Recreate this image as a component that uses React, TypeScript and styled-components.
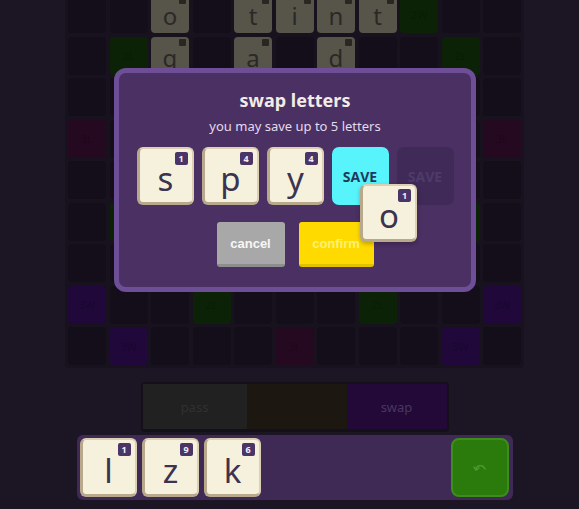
import React from 'react';
import styled, { createGlobalStyle } from 'styled-components';

type Cell = { kind?: 'tw' | 'dw' | 'tl' | 'dl'; label?: string; letter?: string };

const GlobalStyle = createGlobalStyle`
  html, body {
    margin: 0;
    padding: 0;
    background: #1c1624;
  }
  body {
    font-family: 'Noto Sans', 'Open Sans', sans-serif;
  }
`;

const cellColors = {
  tw: '#20083a',
  dw: '#0c2206',
  tl: '#250920',
  dl: '#0c2206',
};

const labelColors = {
  tw: '#1a0632',
  dw: '#0a1c05',
  tl: '#1f071b',
  dl: '#0a1c05',
};

// 9 visible rows of the 11-column board
const board: Cell[][] = Array.from({ length: 9 }, () =>
  Array.from({ length: 11 }, () => ({})),
);
const put = (r: number, c: number, cell: Cell) => {
  board[r][c] = cell;
};
put(0, 2, { letter: 'o' });
put(0, 4, { letter: 't' });
put(0, 5, { letter: 'i' });
put(0, 6, { letter: 'n' });
put(0, 7, { letter: 't' });
put(0, 8, { kind: 'dw', label: '2W' });
put(1, 1, { kind: 'dl', label: '2L' });
put(1, 2, { letter: 'g' });
put(1, 4, { letter: 'a' });
put(1, 6, { letter: 'd' });
put(1, 9, { kind: 'dl', label: '2L' });
put(3, 0, { kind: 'tl', label: '3L' });
put(3, 10, { kind: 'tl', label: '3L' });
put(5, 1, { kind: 'dl', label: '2L' });
put(5, 9, { kind: 'dl', label: '2L' });
put(7, 0, { kind: 'tw', label: '3W' });
put(7, 3, { kind: 'dl', label: '2L' });
put(7, 7, { kind: 'dl', label: '2L' });
put(7, 10, { kind: 'tw', label: '3W' });
put(8, 1, { kind: 'tw', label: '3W' });
put(8, 5, { kind: 'tl', label: '3L' });
put(8, 9, { kind: 'tw', label: '3W' });

const swapTiles = [
  { letter: 's', score: 1 },
  { letter: 'p', score: 4 },
  { letter: 'y', score: 4 },
];

const rackTiles = [
  { letter: 'l', score: 1 },
  { letter: 'z', score: 9 },
  { letter: 'k', score: 6 },
];

const Page = styled.div`
  position: relative;
  width: 579px;
  height: 509px;
  box-sizing: border-box;
  padding-left: 10px;
  overflow: hidden;
  display: flex;
  flex-direction: column;
  align-items: center;
`;

const Board = styled.div`
  margin-top: -8px;
  padding: 3px;
  background: #17121e;
  border-radius: 4px;
  display: grid;
  grid-template-columns: repeat(11, 38px);
  grid-auto-rows: 38px;
  gap: 3.5px;
`;

const Square = styled.div<{ $kind?: Cell['kind'] }>`
  border-radius: 4px;
  background: ${p => (p.$kind ? cellColors[p.$kind] : '#130e19')};
  color: ${p => (p.$kind ? labelColors[p.$kind] : 'transparent')};
  display: flex;
  align-items: center;
  justify-content: center;
  font-size: 11px;
`;

const BoardTile = styled.div`
  position: relative;
  border-radius: 4px;
  background: #57544a;
  color: #2b2925;
  display: flex;
  align-items: center;
  justify-content: center;
  font-size: 24px;
  line-height: 1;
  padding-top: 4px;
  box-sizing: border-box;
`;

const BoardBadge = styled.span`
  position: absolute;
  top: 2px;
  right: 3px;
  width: 7px;
  height: 7px;
  border-radius: 1px;
  background: #2a2723;
`;

const Modal = styled.div`
  position: absolute;
  left: 114px;
  top: 68px;
  width: 362px;
  height: 224px;
  box-sizing: border-box;
  border: 5px solid #6d4e97;
  border-radius: 12px;
  background: #4a3063;
  display: flex;
  flex-direction: column;
  align-items: center;
  padding-top: 15px;
`;

const Title = styled.div`
  font-size: 18px;
  line-height: 24px;
  font-weight: 700;
  color: #f3ece6;
`;

const Subtitle = styled.div`
  margin-top: 5px;
  font-size: 13px;
  line-height: 18px;
  color: #e4dbea;
`;

const TileRow = styled.div`
  margin-top: 12px;
  display: flex;
  gap: 8px;
`;

const Tile = styled.div<{ $h?: number }>`
  position: relative;
  width: 57px;
  height: ${p => p.$h ?? 58}px;
  box-sizing: border-box;
  border: 2px solid #ddd0b2;
  border-left: 3px solid #b8a98c;
  border-bottom: 3px solid #b8a98c;
  border-radius: 6px;
  background: #f6f1dc;
  color: #3b3350;
  display: flex;
  align-items: center;
  justify-content: center;
  font-size: 33px;
  line-height: 1;
  padding-top: 6px;
`;

const Score = styled.span`
  position: absolute;
  top: 3px;
  right: 4px;
  width: 13px;
  height: 13px;
  border-radius: 2px;
  background: #4a3566;
  color: #f4eefa;
  font-size: 9px;
  font-weight: 700;
  line-height: 13px;
  text-align: center;
`;

const SaveSlot = styled.div<{ $active?: boolean }>`
  width: 57px;
  height: 58px;
  border-radius: 7px;
  background: ${p => (p.$active ? '#57f4fb' : '#3f2a58')};
  color: ${p => (p.$active ? '#1f3a5c' : '#4f3b69')};
  font-family: 'Open Sans', sans-serif;
  font-weight: 700;
  font-size: 14px;
  display: flex;
  align-items: center;
  justify-content: center;
`;

const ButtonRow = styled.div`
  margin-top: 17px;
  display: flex;
  gap: 14px;
`;

const ActionButton = styled.div<{ $tone: 'grey' | 'yellow' }>`
  height: 45px;
  width: ${p => (p.$tone === 'grey' ? 68 : 75)}px;
  box-sizing: border-box;
  border-radius: 3px;
  border-bottom: 3px solid ${p => (p.$tone === 'grey' ? '#8e8e8e' : '#e3c000')};
  background: ${p => (p.$tone === 'grey' ? '#a8a8a8' : '#ffda00')};
  color: ${p => (p.$tone === 'grey' ? '#f7f7f7' : '#fff176')};
  font-family: 'Liberation Sans', Arial, sans-serif;
  font-weight: 700;
  font-size: 13px;
  display: flex;
  align-items: center;
  justify-content: center;
`;

const DraggedTile = styled(Tile)`
  position: absolute;
  left: 241px;
  top: 111px;
  box-shadow: 0 2px 4px rgba(0, 0, 0, 0.25);
`;

const TurnBar = styled.div`
  margin-top: 14px;
  width: 308px;
  height: 50px;
  box-sizing: border-box;
  padding: 2px 2px 3px;
  border-radius: 4px;
  background: #141019;
  display: grid;
  grid-template-columns: 104px 100px 1fr;
`;

const TurnButton = styled.div<{ $bg: string; $fg: string }>`
  background: ${p => p.$bg};
  color: ${p => p.$fg};
  font-size: 13px;
  display: flex;
  align-items: center;
  justify-content: center;
`;

const Rack = styled.div`
  margin-top: 3px;
  width: 436px;
  height: 65px;
  box-sizing: border-box;
  padding: 3px 4px 3px 3px;
  border-radius: 6px;
  background: #3e2a55;
  display: flex;
  gap: 5px;
`;

const UndoButton = styled.div`
  margin-left: auto;
  width: 58px;
  height: 59px;
  box-sizing: border-box;
  border: 2px solid #3c8d1c;
  border-radius: 8px;
  background: #2b7b0c;
  color: #4f9a35;
  display: flex;
  align-items: center;
  justify-content: center;
`;

function LetterTile({ letter, score, h }: { letter: string; score: number; h?: number }) {
  return (
    <Tile $h={h}>
      {letter}
      <Score>{score}</Score>
    </Tile>
  );
}

export default function App() {
  return (
    <>
      <GlobalStyle />
      <Page>
        <Board>
          {board.flatMap((row, r) =>
            row.map((cell, c) =>
              cell.letter ? (
                <BoardTile key={`${r}-${c}`}>
                  {cell.letter}
                  <BoardBadge />
                </BoardTile>
              ) : (
                <Square key={`${r}-${c}`} $kind={cell.kind}>
                  {cell.label}
                </Square>
              ),
            ),
          )}
        </Board>

        <TurnBar>
          <TurnButton $bg="#212121" $fg="#303030">pass</TurnButton>
          <TurnButton $bg="#1c1711" $fg="#1c1711">play</TurnButton>
          <TurnButton $bg="#220938" $fg="#4a3760">swap</TurnButton>
        </TurnBar>

        <Rack>
          {rackTiles.map(t => (
            <LetterTile key={t.letter} letter={t.letter} score={t.score} h={59} />
          ))}
          <UndoButton>
            <svg width="14" height="10" viewBox="0 0 14 10" fill="none">
              <path
                d="M3 6 C4 2, 10 1, 12 6"
                stroke="currentColor"
                strokeWidth="1.4"
                strokeLinecap="round"
              />
              <path d="M1 4 L3 7 L6 5" stroke="currentColor" strokeWidth="1.4" strokeLinecap="round" />
            </svg>
          </UndoButton>
        </Rack>

        <Modal>
          <Title>swap letters</Title>
          <Subtitle>you may save up to 5 letters</Subtitle>
          <TileRow>
            {swapTiles.map(t => (
              <LetterTile key={t.letter} letter={t.letter} score={t.score} />
            ))}
            <SaveSlot $active>SAVE</SaveSlot>
            <SaveSlot>SAVE</SaveSlot>
          </TileRow>
          <ButtonRow>
            <ActionButton $tone="grey">cancel</ActionButton>
            <ActionButton $tone="yellow">confirm</ActionButton>
          </ButtonRow>
          <DraggedTile>
            o
            <Score>1</Score>
          </DraggedTile>
        </Modal>
      </Page>
    </>
  );
}
